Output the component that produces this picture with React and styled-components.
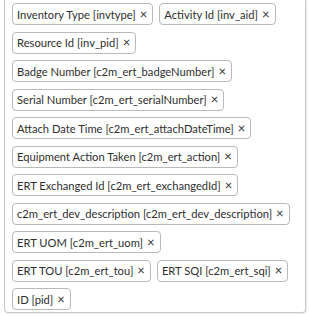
import React from "react";
import styled, { createGlobalStyle } from "styled-components";

const GlobalStyle = createGlobalStyle`
  html, body {
    margin: 0;
    padding: 0;
    background: #ffffff;
  }
  body {
    font-family: Lato, "Noto Sans", sans-serif;
  }
`;

const Frame = styled.div`
  padding: 0 3px 2px 4px;
`;

const ChipBox = styled.div`
  display: flex;
  flex-wrap: wrap;
  align-content: flex-start;
  gap: 6.5px 6px;
  padding: 3px 7px 2px 7px;
  border: 1px solid #c8c8c8;
  border-top: none;
  border-radius: 0 0 4px 4px;
  box-shadow: 1px 1px 1px rgba(0, 0, 0, 0.08);
`;

const Chip = styled.div`
  display: inline-flex;
  align-items: center;
  height: 20px;
  padding: 0 5px 0 4px;
  border: 1px solid #b9b9b9;
  border-radius: 4px;
  background: #ffffff;
  color: #2f2f2f;
  font-size: 11.2px;
  white-space: nowrap;
`;

const Close = styled.span`
  margin-left: 4px;
  font-size: 13px;
  line-height: 1;
  color: #333333;
  cursor: pointer;
`;

const fields = [
  "Inventory Type [invtype]",
  "Activity Id [inv_aid]",
  "Resource Id [inv_pid]",
  "Badge Number [c2m_ert_badgeNumber]",
  "Serial Number [c2m_ert_serialNumber]",
  "Attach Date Time [c2m_ert_attachDateTime]",
  "Equipment Action Taken [c2m_ert_action]",
  "ERT Exchanged Id [c2m_ert_exchangedId]",
  "c2m_ert_dev_description [c2m_ert_dev_description]",
  "ERT UOM [c2m_ert_uom]",
  "ERT TOU [c2m_ert_tou]",
  "ERT SQI [c2m_ert_sqi]",
  "ID [pid]",
];

export default function App() {
  return (
    <>
      <GlobalStyle />
      <Frame>
        <ChipBox>
          {fields.map((f) => (
            <Chip key={f}>
              {f}
              <Close>×</Close>
            </Chip>
          ))}
        </ChipBox>
      </Frame>
    </>
  );
}
